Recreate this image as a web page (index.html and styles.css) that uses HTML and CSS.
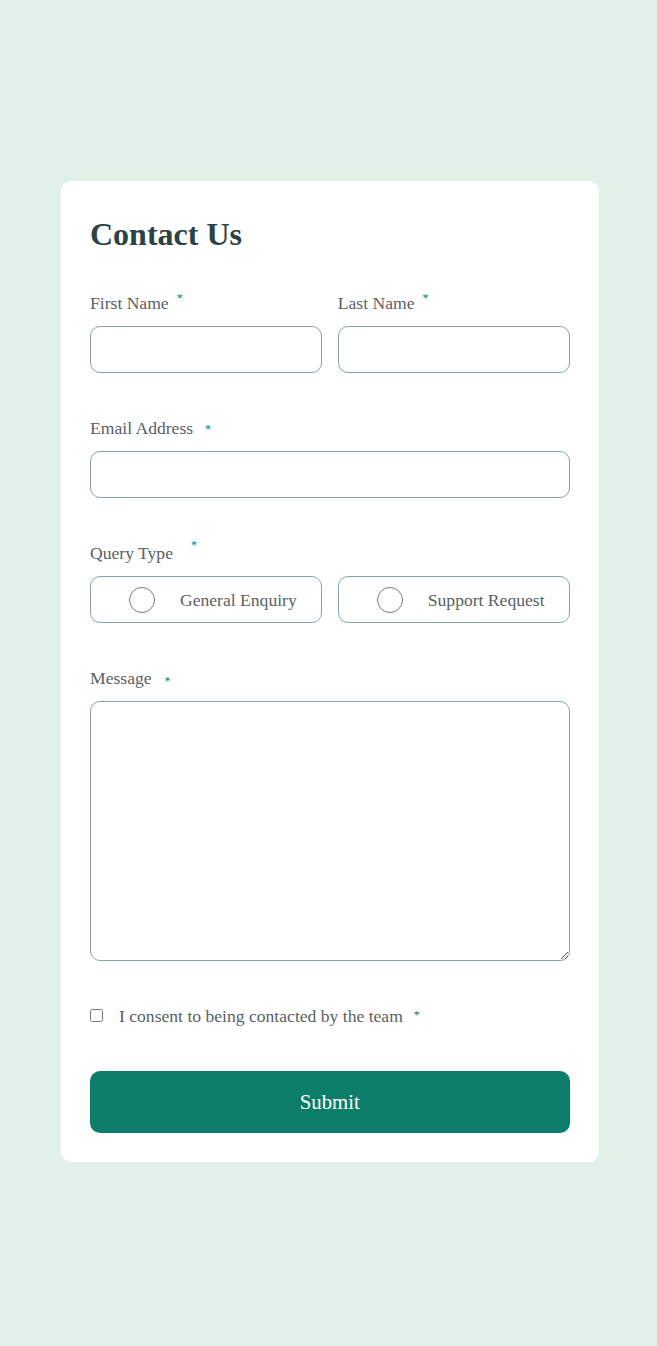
FILE: index.html
```html
<!DOCTYPE html>
<html lang="en">
<head>
<meta charset="utf-8">
<title>Contact Us</title>
<link rel="stylesheet" href="styles.css">
</head>
<body>
<main class="page">
  <form class="card">
    <h1 class="title">Contact Us</h1>
    <div class="row">
      <div class="field">
        <label class="label">First Name<span class="req req--sup">*</span></label>
        <input class="input" type="text">
      </div>
      <div class="field">
        <label class="label">Last Name<span class="req req--sup">*</span></label>
        <input class="input" type="text">
      </div>
    </div>
    <div class="field">
      <label class="label">Email Address<span class="req req--wide">*</span></label>
      <input class="input" type="email">
    </div>
    <div class="field">
      <label class="label">Query Type<span class="req req--high">*</span></label>
      <div class="row">
        <label class="option"><input class="radio" type="radio" name="q"><span>General Enquiry</span></label>
        <label class="option"><input class="radio" type="radio" name="q"><span>Support Request</span></label>
      </div>
    </div>
    <div class="field">
      <label class="label">Message<span class="req req--low">*</span></label>
      <textarea class="textarea"></textarea>
    </div>
    <label class="consent"><input class="check" type="checkbox"><span>I consent to being contacted by the team</span><span class="req req--consent">*</span></label>
    <button class="submit" type="button">Submit</button>
  </form>
</main>
</body>
</html>
```

FILE: styles.css
```css
* { box-sizing: border-box; }
html, body { margin: 0; padding: 0; }
body {
  background: #e0f1e8;
  font-family: "Liberation Serif", "Times New Roman", serif;
  color: #595f63;
}
.page {
  padding: 181px 0 0 61px;
  min-height: 1346px;
}
.card {
  width: 537.5px;
  background: #ffffff;
  border-radius: 11px;
  padding: 33px 29px 29px 29px;
  display: flex;
  flex-direction: column;
  gap: 45px;
}
.title {
  margin: 0 0 -6px 0;
  font-size: 32px;
  line-height: 40px;
  font-weight: 700;
  color: #2b4246;
}
.row {
  display: grid;
  grid-template-columns: 1fr 1fr;
  gap: 16px;
}
.field {
  display: flex;
  flex-direction: column;
  gap: 13px;
}
.label {
  font-size: 17.6px;
  line-height: 20px;
  height: 20px;
  color: #595f63;
  display: block;
}
.req {
  color: #0c7d69;
  font-size: 12px;
  line-height: 0;
  position: relative;
}
.req--sup { margin-left: 8px; top: -7px; }
.req--wide { margin-left: 12px; top: -1px; }
.req--high { margin-left: 18px; top: -10px; }
.req--low { margin-left: 13px; top: 1px; }
.req--consent { margin-left: 11px; top: -1px; }
.input {
  display: block;
  width: 100%;
  height: 47px;
  border: 1px solid #87a3a6;
  border-radius: 10px;
  background: #fff;
  font: inherit;
  padding: 0 16px;
  outline: none;
}
.option {
  height: 47px;
  border: 1px solid #87a3a6;
  border-radius: 10px;
  display: flex;
  align-items: center;
  padding-left: 38px;
  gap: 25px;
  font-size: 17.6px;
  line-height: 20px;
  color: #595f63;
}
.radio {
  appearance: none;
  -webkit-appearance: none;
  margin: 0;
  width: 26px;
  height: 26px;
  border: 1.3px solid #7a7a7a;
  border-radius: 50%;
  background: #fff;
  flex: none;
}
.textarea {
  display: block;
  width: 100%;
  height: 259.5px;
  border: 1px solid #87a3a6;
  border-radius: 10px;
  font: inherit;
  padding: 10px 16px;
  outline: none;
}
.consent {
  display: flex;
  align-items: center;
  height: 20px;
  font-size: 17.6px;
  line-height: 20px;
  color: #595f63;
}
.check {
  appearance: none;
  -webkit-appearance: none;
  margin: 0 16px 0 0;
  width: 13px;
  height: 13px;
  border: 1px solid #767676;
  border-radius: 2.5px;
  background: #fff;
  flex: none;
}
.submit {
  display: block;
  width: 100%;
  height: 62.5px;
  border: none;
  border-radius: 10px;
  background: #0c7d69;
  color: #ffffff;
  font-family: "Liberation Serif", "Times New Roman", serif;
  font-size: 20.8px;
  cursor: pointer;
}
```
